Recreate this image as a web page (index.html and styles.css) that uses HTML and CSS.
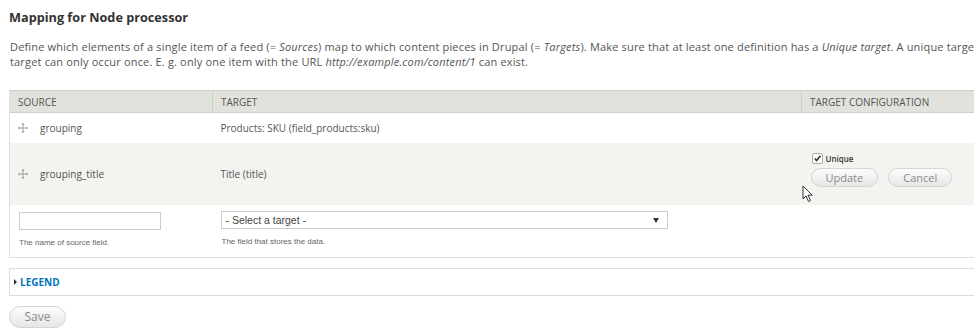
FILE: index.html
```html
<!DOCTYPE html>
<html lang="en">
<head>
    <meta charset="UTF-8" />
    <meta name="viewport" content="width=device-width, initial-scale=1.0" />
    <title>Mapping for Node processor</title>
    <link rel="stylesheet" href="styles.css">
</head>
<body>
    <div class="page">
        <h2 class="title">Mapping for Node processor</h2>
        <p class="intro">
            Define which elements of a single item of a feed (= <em>Sources</em>) map to which content pieces in Drupal (= <em>Targets</em>). Make sure that at least one definition has a <em>Unique target</em>. A unique target means that a value for a<br>
            target can only occur once. E. g. only one item with the URL <em>http://example.com/content/1</em> can exist.
        </p>

        <div class="mapping">
            <table class="mapping-table">
                <thead>
                    <tr>
                        <th class="col-source">Source</th>
                        <th class="col-target">Target</th>
                        <th class="col-config">Target configuration</th>
                    </tr>
                </thead>
                <tbody>
                    <tr class="odd">
                        <td>
                            <span class="drag">
                                <svg width="10" height="10" viewBox="0 0 11 11"><path d="M5.5 0.5v10M0.5 5.5h10" stroke="#9a9a9a" stroke-width="1" fill="none"/><path d="M5.5 0 L3.8 2 H7.2Z M5.5 11 L3.8 9 H7.2Z M0 5.5 L2 3.8 V7.2Z M11 5.5 L9 3.8 V7.2Z" fill="#9a9a9a"/></svg>
                            </span>grouping
                        </td>
                        <td>Products: SKU (field_products:sku)</td>
                        <td></td>
                    </tr>
                    <tr class="even">
                        <td>
                            <span class="drag">
                                <svg width="10" height="10" viewBox="0 0 11 11"><path d="M5.5 0.5v10M0.5 5.5h10" stroke="#9a9a9a" stroke-width="1" fill="none"/><path d="M5.5 0 L3.8 2 H7.2Z M5.5 11 L3.8 9 H7.2Z M0 5.5 L2 3.8 V7.2Z M11 5.5 L9 3.8 V7.2Z" fill="#9a9a9a"/></svg>
                            </span>grouping_title
                        </td>
                        <td>Title (title)</td>
                        <td class="config">
                            <label class="check">
                                <span class="box">
                                    <svg width="9" height="9" viewBox="0 0 9 9"><path d="M1.8 4.6 L3.6 6.6 L7.4 1.8" stroke="#333" stroke-width="1.6" fill="none"/></svg>
                                </span>Unique
                            </label>
                            <div class="actions">
                                <button class="btn">Update</button>
                                <button class="btn">Cancel</button>
                            </div>
                        </td>
                    </tr>
                    <tr class="new">
                        <td>
                            <input type="text" class="text-input" />
                            <div class="hint">The name of source field.</div>
                        </td>
                        <td colspan="2">
                            <div class="select">- Select a target -<span class="arrow"></span></div>
                            <div class="hint">The field that stores the data.</div>
                        </td>
                    </tr>
                </tbody>
            </table>
        </div>

        <div class="legend">
            <span class="legend-toggle"></span>Legend
        </div>

        <button class="btn btn-save">Save</button>

        <svg class="cursor" width="12" height="18" viewBox="0 0 12 18"><path d="M1 1 L1 14 L4 11 L6.5 16.5 L8.5 15.5 L6 10.2 L10.2 10.2 Z" fill="#fff" stroke="#333" stroke-width="1"/></svg>
    </div>
</body>
</html>
```

FILE: styles.css
```css
body {
    margin: 0;
    background-color: #fff;
    font-family: "Open Sans", sans-serif;
    color: #555;
    overflow: hidden;
}

.page {
    position: relative;
    width: 1080px;
    padding: 8px 0 0 9px;
}

.title {
    margin: 0;
    font-size: 12.7px;
    font-weight: bold;
    color: #333;
    line-height: 18px;
}

.intro {
    margin: 13px 0 0 1px;
    font-size: 11px;
    letter-spacing: 0.17px;
    line-height: 15px;
    white-space: nowrap;
}

.mapping {
    margin-top: 21px;
    border: 1px solid #ddd;
    border-top: none;
    padding-bottom: 10px;
}

.mapping-table {
    width: 100%;
    border-collapse: collapse;
    font-size: 10px;
}

.mapping-table th {
    background-color: #e1e2dc;
    border-top: 1px solid #cfcfca;
    border-bottom: 1px solid #cfcfca;
    text-align: left;
    font-weight: normal;
    text-transform: uppercase;
    color: #555;
    height: 21px;
    padding: 0 8px;
}

.mapping-table th + th {
    border-left: 1px solid #cfcfca;
}

.col-source { width: 186px; }
.col-target { width: 572px; }

.mapping-table td {
    padding: 0 8px;
    vertical-align: middle;
    color: #555;
}

.odd td {
    height: 30px;
    background-color: #fff;
}

.even td {
    height: 62px;
    background-color: #f3f3ef;
}

.drag {
    display: inline-block;
    vertical-align: middle;
    margin: -2px 12px 0 0;
    line-height: 0;
}

.even td.config {
    padding: 10px 0 0 9px;
    vertical-align: top;
    height: 52px;
}

.check {
    display: flex;
    align-items: center;
    font-size: 8px;
    font-weight: 600;
    color: #333;
    margin: 0 0 4px 1px;
}

.box {
    display: inline-flex;
    width: 9px;
    height: 9px;
    border: 1px solid #aaa;
    border-radius: 2px;
    background-color: #fff;
    margin-right: 3px;
}

.actions {
    display: flex;
    gap: 10px;
}

.btn {
    font-family: "Open Sans", sans-serif;
    font-size: 11px;
    color: #8a8a8a;
    background: linear-gradient(#fdfdfd, #e6e6e6);
    border: 1px solid #d4d4d4;
    border-radius: 10px;
    height: 19px;
    line-height: 16px;
    padding: 0 14px;
    cursor: pointer;
}

.new td {
    padding-top: 7px;
    vertical-align: top;
}

.text-input {
    display: block;
    box-sizing: border-box;
    width: 142px;
    height: 18px;
    margin: 0 0 0 1px;
    border: 1px solid #ccc;
    background-color: #fff;
}

.select {
    position: relative;
    box-sizing: border-box;
    width: 447px;
    height: 18px;
    margin-top: -1px;
    border: 1px solid #ccc;
    font-family: "Liberation Sans", Arial, sans-serif;
    font-size: 10.5px;
    line-height: 16px;
    padding-left: 4px;
    color: #444;
}

.arrow {
    position: absolute;
    right: 8px;
    top: 6px;
    border-left: 3px solid transparent;
    border-right: 3px solid transparent;
    border-top: 5px solid #333;
}

.hint {
    font-family: "Liberation Sans", Arial, sans-serif;
    font-size: 8px;
    color: #666;
    margin-top: 8px;
    margin-left: 1px;
}

.legend {
    margin-top: 10px;
    border: 1px solid #ddd;
    height: 26px;
    display: flex;
    align-items: center;
    padding-left: 4px;
    font-size: 10px;
    font-weight: bold;
    text-transform: uppercase;
    color: #0074bd;
}

.legend-toggle {
    width: 0;
    height: 0;
    border-top: 3px solid transparent;
    border-bottom: 3px solid transparent;
    border-left: 3px solid #333;
    margin-right: 3px;
}

.btn-save {
    margin-top: 10px;
    height: 22px;
    width: 57px;
    border-radius: 11px;
    font-size: 12px;
    padding: 0;
}

.cursor {
    position: absolute;
    left: 802px;
    top: 185px;
}
```
